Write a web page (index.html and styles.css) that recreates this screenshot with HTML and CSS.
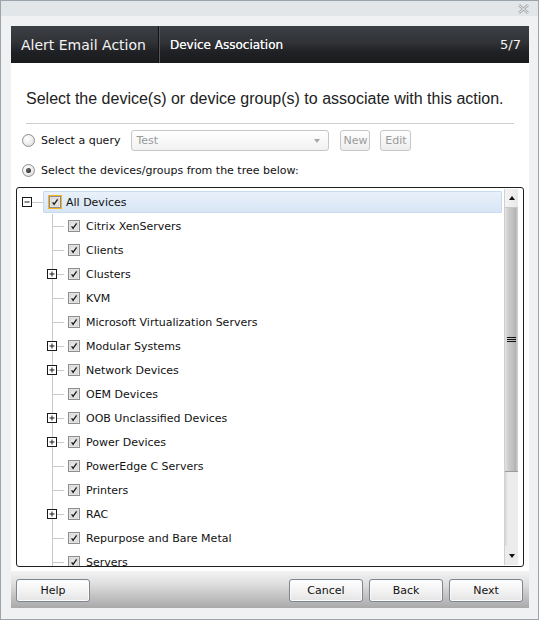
FILE: index.html
```html
<!DOCTYPE html>
<html>
<head>
<meta charset="utf-8">
<link rel="stylesheet" href="styles.css">
</head>
<body>
<div class="window">
  <div class="titlebar">
    <svg class="close" width="11" height="10" viewBox="0 0 11 10"><path d="M1 1 L10 9 M10 1 L1 9" stroke="#a6a9ad" stroke-width="2.6" fill="none"/><path d="M1 1 L10 9 M10 1 L1 9" stroke="#eceef0" stroke-width="1" fill="none"/></svg>
  </div>
  <div class="main">
    <div class="header">
      <span class="h-title">Alert Email Action</span>
      <span class="h-div"></span>
      <span class="h-sub">Device Association</span>
      <span class="h-step">5/7</span>
    </div>
    <div class="panel">
      <div class="heading">Select the device(s) or device group(s) to associate with this action.</div>
      <div class="sep"></div>
      <div class="qrow">
        <span class="radio"></span>
        <span class="lbl">Select a query</span>
        <span class="select"><span class="sel-text">Test</span><span class="arrow"></span></span>
        <span class="sbtn new">New</span>
        <span class="sbtn">Edit</span>
      </div>
      <div class="trow">
        <span class="radio checked"></span>
        <span class="lbl">Select the devices/groups from the tree below:</span>
      </div>
      <div class="tree">
        <div class="rows">
          <div class="root">
            <svg class="exp" width="10" height="10" viewBox="0 0 10 10"><rect x="0.5" y="0.5" width="9" height="9" fill="#fff" stroke="#1a1a1a"/><path d="M2.5 5 H7.5" stroke="#1a1a1a"/></svg>
            <span class="rconn"></span>
            <div class="hl">
              <span class="focus"><svg class="cb" width="12" height="12" viewBox="0 0 12 12"><rect x="0.5" y="0.5" width="11" height="11" fill="#f4f4f4" stroke="#8d8d8d"/><rect x="2" y="2" width="8" height="8" fill="#e6e6e6" stroke="#bdbdbd" stroke-width="0.6"/><path d="M3.6 6.4 L5.1 8.3 L8.6 3.4" stroke="#1e1e1e" stroke-width="1.4" fill="none"/></svg></span>
              <span class="txt">All Devices</span>
            </div>
          </div>
          <div class="children">
            <div class="row"><span class="slot"></span><span class="conn"></span><svg class="cb" width="12" height="12" viewBox="0 0 12 12"><rect x="0.5" y="0.5" width="11" height="11" fill="#f4f4f4" stroke="#8d8d8d"/><rect x="2" y="2" width="8" height="8" fill="#e6e6e6" stroke="#bdbdbd" stroke-width="0.6"/><path d="M3.6 6.4 L5.1 8.3 L8.6 3.4" stroke="#1e1e1e" stroke-width="1.4" fill="none"/></svg><span class="txt">Citrix XenServers</span></div>
            <div class="row"><span class="slot"></span><span class="conn"></span><svg class="cb" width="12" height="12" viewBox="0 0 12 12"><rect x="0.5" y="0.5" width="11" height="11" fill="#f4f4f4" stroke="#8d8d8d"/><rect x="2" y="2" width="8" height="8" fill="#e6e6e6" stroke="#bdbdbd" stroke-width="0.6"/><path d="M3.6 6.4 L5.1 8.3 L8.6 3.4" stroke="#1e1e1e" stroke-width="1.4" fill="none"/></svg><span class="txt">Clients</span></div>
            <div class="row"><span class="slot"><svg class="exp" width="10" height="10" viewBox="0 0 10 10"><rect x="0.5" y="0.5" width="9" height="9" fill="#fff" stroke="#1a1a1a"/><path d="M2.5 5 H7.5 M5 2.5 V7.5" stroke="#1a1a1a"/></svg></span><span class="conn"></span><svg class="cb" width="12" height="12" viewBox="0 0 12 12"><rect x="0.5" y="0.5" width="11" height="11" fill="#f4f4f4" stroke="#8d8d8d"/><rect x="2" y="2" width="8" height="8" fill="#e6e6e6" stroke="#bdbdbd" stroke-width="0.6"/><path d="M3.6 6.4 L5.1 8.3 L8.6 3.4" stroke="#1e1e1e" stroke-width="1.4" fill="none"/></svg><span class="txt">Clusters</span></div>
            <div class="row"><span class="slot"></span><span class="conn"></span><svg class="cb" width="12" height="12" viewBox="0 0 12 12"><rect x="0.5" y="0.5" width="11" height="11" fill="#f4f4f4" stroke="#8d8d8d"/><rect x="2" y="2" width="8" height="8" fill="#e6e6e6" stroke="#bdbdbd" stroke-width="0.6"/><path d="M3.6 6.4 L5.1 8.3 L8.6 3.4" stroke="#1e1e1e" stroke-width="1.4" fill="none"/></svg><span class="txt">KVM</span></div>
            <div class="row"><span class="slot"></span><span class="conn"></span><svg class="cb" width="12" height="12" viewBox="0 0 12 12"><rect x="0.5" y="0.5" width="11" height="11" fill="#f4f4f4" stroke="#8d8d8d"/><rect x="2" y="2" width="8" height="8" fill="#e6e6e6" stroke="#bdbdbd" stroke-width="0.6"/><path d="M3.6 6.4 L5.1 8.3 L8.6 3.4" stroke="#1e1e1e" stroke-width="1.4" fill="none"/></svg><span class="txt">Microsoft Virtualization Servers</span></div>
            <div class="row"><span class="slot"><svg class="exp" width="10" height="10" viewBox="0 0 10 10"><rect x="0.5" y="0.5" width="9" height="9" fill="#fff" stroke="#1a1a1a"/><path d="M2.5 5 H7.5 M5 2.5 V7.5" stroke="#1a1a1a"/></svg></span><span class="conn"></span><svg class="cb" width="12" height="12" viewBox="0 0 12 12"><rect x="0.5" y="0.5" width="11" height="11" fill="#f4f4f4" stroke="#8d8d8d"/><rect x="2" y="2" width="8" height="8" fill="#e6e6e6" stroke="#bdbdbd" stroke-width="0.6"/><path d="M3.6 6.4 L5.1 8.3 L8.6 3.4" stroke="#1e1e1e" stroke-width="1.4" fill="none"/></svg><span class="txt">Modular Systems</span></div>
            <div class="row"><span class="slot"><svg class="exp" width="10" height="10" viewBox="0 0 10 10"><rect x="0.5" y="0.5" width="9" height="9" fill="#fff" stroke="#1a1a1a"/><path d="M2.5 5 H7.5 M5 2.5 V7.5" stroke="#1a1a1a"/></svg></span><span class="conn"></span><svg class="cb" width="12" height="12" viewBox="0 0 12 12"><rect x="0.5" y="0.5" width="11" height="11" fill="#f4f4f4" stroke="#8d8d8d"/><rect x="2" y="2" width="8" height="8" fill="#e6e6e6" stroke="#bdbdbd" stroke-width="0.6"/><path d="M3.6 6.4 L5.1 8.3 L8.6 3.4" stroke="#1e1e1e" stroke-width="1.4" fill="none"/></svg><span class="txt">Network Devices</span></div>
            <div class="row"><span class="slot"></span><span class="conn"></span><svg class="cb" width="12" height="12" viewBox="0 0 12 12"><rect x="0.5" y="0.5" width="11" height="11" fill="#f4f4f4" stroke="#8d8d8d"/><rect x="2" y="2" width="8" height="8" fill="#e6e6e6" stroke="#bdbdbd" stroke-width="0.6"/><path d="M3.6 6.4 L5.1 8.3 L8.6 3.4" stroke="#1e1e1e" stroke-width="1.4" fill="none"/></svg><span class="txt">OEM Devices</span></div>
            <div class="row"><span class="slot"><svg class="exp" width="10" height="10" viewBox="0 0 10 10"><rect x="0.5" y="0.5" width="9" height="9" fill="#fff" stroke="#1a1a1a"/><path d="M2.5 5 H7.5 M5 2.5 V7.5" stroke="#1a1a1a"/></svg></span><span class="conn"></span><svg class="cb" width="12" height="12" viewBox="0 0 12 12"><rect x="0.5" y="0.5" width="11" height="11" fill="#f4f4f4" stroke="#8d8d8d"/><rect x="2" y="2" width="8" height="8" fill="#e6e6e6" stroke="#bdbdbd" stroke-width="0.6"/><path d="M3.6 6.4 L5.1 8.3 L8.6 3.4" stroke="#1e1e1e" stroke-width="1.4" fill="none"/></svg><span class="txt">OOB Unclassified Devices</span></div>
            <div class="row"><span class="slot"><svg class="exp" width="10" height="10" viewBox="0 0 10 10"><rect x="0.5" y="0.5" width="9" height="9" fill="#fff" stroke="#1a1a1a"/><path d="M2.5 5 H7.5 M5 2.5 V7.5" stroke="#1a1a1a"/></svg></span><span class="conn"></span><svg class="cb" width="12" height="12" viewBox="0 0 12 12"><rect x="0.5" y="0.5" width="11" height="11" fill="#f4f4f4" stroke="#8d8d8d"/><rect x="2" y="2" width="8" height="8" fill="#e6e6e6" stroke="#bdbdbd" stroke-width="0.6"/><path d="M3.6 6.4 L5.1 8.3 L8.6 3.4" stroke="#1e1e1e" stroke-width="1.4" fill="none"/></svg><span class="txt">Power Devices</span></div>
            <div class="row"><span class="slot"></span><span class="conn"></span><svg class="cb" width="12" height="12" viewBox="0 0 12 12"><rect x="0.5" y="0.5" width="11" height="11" fill="#f4f4f4" stroke="#8d8d8d"/><rect x="2" y="2" width="8" height="8" fill="#e6e6e6" stroke="#bdbdbd" stroke-width="0.6"/><path d="M3.6 6.4 L5.1 8.3 L8.6 3.4" stroke="#1e1e1e" stroke-width="1.4" fill="none"/></svg><span class="txt">PowerEdge C Servers</span></div>
            <div class="row"><span class="slot"></span><span class="conn"></span><svg class="cb" width="12" height="12" viewBox="0 0 12 12"><rect x="0.5" y="0.5" width="11" height="11" fill="#f4f4f4" stroke="#8d8d8d"/><rect x="2" y="2" width="8" height="8" fill="#e6e6e6" stroke="#bdbdbd" stroke-width="0.6"/><path d="M3.6 6.4 L5.1 8.3 L8.6 3.4" stroke="#1e1e1e" stroke-width="1.4" fill="none"/></svg><span class="txt">Printers</span></div>
            <div class="row"><span class="slot"><svg class="exp" width="10" height="10" viewBox="0 0 10 10"><rect x="0.5" y="0.5" width="9" height="9" fill="#fff" stroke="#1a1a1a"/><path d="M2.5 5 H7.5 M5 2.5 V7.5" stroke="#1a1a1a"/></svg></span><span class="conn"></span><svg class="cb" width="12" height="12" viewBox="0 0 12 12"><rect x="0.5" y="0.5" width="11" height="11" fill="#f4f4f4" stroke="#8d8d8d"/><rect x="2" y="2" width="8" height="8" fill="#e6e6e6" stroke="#bdbdbd" stroke-width="0.6"/><path d="M3.6 6.4 L5.1 8.3 L8.6 3.4" stroke="#1e1e1e" stroke-width="1.4" fill="none"/></svg><span class="txt">RAC</span></div>
            <div class="row"><span class="slot"></span><span class="conn"></span><svg class="cb" width="12" height="12" viewBox="0 0 12 12"><rect x="0.5" y="0.5" width="11" height="11" fill="#f4f4f4" stroke="#8d8d8d"/><rect x="2" y="2" width="8" height="8" fill="#e6e6e6" stroke="#bdbdbd" stroke-width="0.6"/><path d="M3.6 6.4 L5.1 8.3 L8.6 3.4" stroke="#1e1e1e" stroke-width="1.4" fill="none"/></svg><span class="txt">Repurpose and Bare Metal</span></div>
            <div class="row"><span class="slot"></span><span class="conn"></span><svg class="cb" width="12" height="12" viewBox="0 0 12 12"><rect x="0.5" y="0.5" width="11" height="11" fill="#f4f4f4" stroke="#8d8d8d"/><rect x="2" y="2" width="8" height="8" fill="#e6e6e6" stroke="#bdbdbd" stroke-width="0.6"/><path d="M3.6 6.4 L5.1 8.3 L8.6 3.4" stroke="#1e1e1e" stroke-width="1.4" fill="none"/></svg><span class="txt">Servers</span></div>
          </div>
        </div>
        <div class="scrollbar">
          <div class="sb-btn"><span class="tri up"></span></div>
          <div class="thumb"><span class="grip"></span></div>
          <div class="track"></div>
          <div class="sb-btn bottom"><span class="tri down"></span></div>
        </div>
      </div>
    </div>
    <div class="footer">
      <span class="btn">Help</span>
      <span class="spacer"></span>
      <span class="btn">Cancel</span>
      <span class="btn">Back</span>
      <span class="btn">Next</span>
    </div>
  </div>
</div>
</body>
</html>
```
FILE: styles.css
```css
html, body {
  margin: 0;
  padding: 0;
  background: #ffffff;
}
body {
  font-family: "DejaVu Sans", Verdana, sans-serif;
  font-size: 11px;
  color: #111;
}
.window {
  width: 539px;
  height: 620px;
  box-sizing: border-box;
  border: 1px solid #9ba3ac;
  background: #eff1f3;
  display: flex;
  flex-direction: column;
}
.titlebar {
  height: 15px;
  background: #e3e6e8;
  display: flex;
  justify-content: flex-end;
  align-items: center;
  padding-right: 9px;
}
.close { display: block; margin-top: 1px; }
.main {
  padding: 10px 9px 0 10px;
  display: flex;
  flex-direction: column;
}
.header {
  height: 37px;
  background: linear-gradient(#3d4045 0%, #303236 45%, #202124 70%, #1a1b1d 100%);
  display: flex;
  align-items: center;
  color: #fff;
  padding: 0 8px 0 10px;
}
.h-title {
  font-size: 14px;
  color: #f4f4f4;
}
.h-div {
  width: 1px;
  height: 37px;
  background: #111;
  box-shadow: 1px 0 0 #55585d;
  margin: 0 11px 0 12px;
}
.h-sub {
  font-size: 12px;
  color: #f4f4f4;
  flex: 1;
  text-shadow: 0 0 0.4px #fff;
}
.h-step {
  font-size: 13px;
  color: #f4f4f4;
}
.panel {
  background: #fff;
  height: 508px;
  box-sizing: border-box;
  display: flex;
  flex-direction: column;
}
.heading {
  font-family: "Liberation Sans", Arial, sans-serif;
  font-size: 16px;
  line-height: 19px;
  color: #222;
  margin: 26px 15px 0 15px;
}
.sep {
  height: 1px;
  background: #cfcfcf;
  margin: 15px 15px 0 15px;
}
.qrow {
  display: flex;
  align-items: center;
  height: 21px;
  margin: 6px 0 0 11px;
}
.trow {
  display: flex;
  align-items: center;
  height: 16px;
  margin: 11px 0 0 11px;
}
.radio {
  width: 13px;
  height: 13px;
  box-sizing: border-box;
  border-radius: 50%;
  border: 1px solid #8f9091;
  background: radial-gradient(circle at 40% 35%, #ffffff 0%, #f0f0f0 45%, #d2d2d2 100%);
  display: flex;
  align-items: center;
  justify-content: center;
  flex: none;
}
.radio.checked::after {
  content: "";
  width: 5px;
  height: 5px;
  border-radius: 50%;
  background: radial-gradient(circle at 40% 35%, #6a6a6a, #1a1a1a);
}
.lbl {
  margin-left: 6px;
  color: #111;
}
.select {
  margin-left: 11px;
  width: 198px;
  height: 21px;
  box-sizing: border-box;
  border: 1px solid #c6c6c6;
  border-radius: 3px;
  background: linear-gradient(#ffffff, #f1f1f1);
  display: flex;
  align-items: center;
  padding: 0 8px 0 4px;
}
.sel-text {
  flex: 1;
  color: #9a9a9a;
}
.arrow {
  width: 0;
  height: 0;
  border-left: 3.5px solid transparent;
  border-right: 3.5px solid transparent;
  border-top: 4px solid #a8a8a8;
}
.sbtn {
  height: 21px;
  box-sizing: border-box;
  border: 1px solid #c6c6c6;
  border-radius: 3px;
  background: linear-gradient(#ffffff, #ededed);
  color: #9a9a9a;
  display: flex;
  align-items: center;
  justify-content: center;
  padding: 0 2px;
  width: 31px;
  margin-left: 10px;
}
.sbtn.new { margin-left: 11px; width: 30px; }
.tree {
  margin: 9px 5px 0 5px;
  height: 380px;
  box-sizing: border-box;
  border: 1px solid #1f1f1f;
  border-radius: 3px;
  display: flex;
  overflow: hidden;
}
.rows {
  flex: 1;
  overflow: hidden;
  padding-top: 2px;
}
.root {
  height: 24px;
  display: flex;
  align-items: center;
  padding-left: 5px;
}
.exp { display: block; flex: none; }
.rconn {
  width: 11px;
  height: 1px;
  background: #c9c9c9;
  flex: none;
}
.hl {
  flex: 1;
  height: 22px;
  box-sizing: border-box;
  border: 1px solid #c7dbef;
  border-radius: 1px;
  background: linear-gradient(#e9f1fa, #d7e5f4);
  margin-right: 2px;
  display: flex;
  align-items: center;
  padding-left: 5px;
}
.focus {
  display: flex;
  border: 1px solid #f2b325;
  margin-left: -1px;
}
.focus .cb { margin: 0; }
.hl .txt { margin-left: 4px; }
.children {
  background: linear-gradient(#c9c9c9, #c9c9c9) no-repeat 35px 0 / 1px 100%;
}
.row {
  height: 24px;
  display: flex;
  align-items: center;
  padding-left: 30px;
}
.slot {
  width: 10px;
  height: 24px;
  flex: none;
  display: flex;
  align-items: center;
  justify-content: center;
  background: linear-gradient(#c9c9c9, #c9c9c9) no-repeat right center / 5px 1px;
}
.conn {
  width: 7px;
  height: 1px;
  background: #c9c9c9;
  flex: none;
  margin-right: 4px;
}
.cb { display: block; flex: none; }
.txt {
  margin-left: 6px;
  color: #111;
  white-space: nowrap;
}
.scrollbar {
  width: 14px;
  margin: 1px 5px 1px 0;
  display: flex;
  flex-direction: column;
  background: #e6e6e6;
  border-left: 1px solid #d0d0d0;
  box-sizing: border-box;
}
.sb-btn {
  height: 19px;
  background: linear-gradient(to right, #f4f4f4, #e8e8e8);
  display: flex;
  align-items: center;
  justify-content: center;
  border-bottom: 1px solid #c8c8c8;
  box-sizing: border-box;
}
.sb-btn.bottom { border-bottom: 0; border-top: 0; background: #ececec; }
.tri {
  width: 0;
  height: 0;
  border-left: 3.5px solid transparent;
  border-right: 3.5px solid transparent;
}
.tri.up { border-bottom: 4px solid #111; }
.tri.down { border-top: 4px solid #111; }
.thumb {
  height: 264px;
  background: linear-gradient(to right, #e2e2e2 0%, #cacaca 30%, #c0c0c0 60%, #b2b2b2 80%, #d4d4d4 100%);
  border-bottom: 1px solid #9a9a9a;
  box-sizing: border-box;
  display: flex;
  align-items: center;
  justify-content: center;
}
.grip {
  width: 9px;
  height: 5px;
  margin-top: 0;
  background: repeating-linear-gradient(#111 0 1px, transparent 1px 2px);
}
.track {
  flex: 1;
  background: linear-gradient(to right, #d6d6d6 0, #ececec 3px, #ececec 100%);
}
.footer {
  height: 37px;
  background: linear-gradient(#f3f3f3 0%, #dedede 35%, #bdbdbd 75%, #a9a9a9 100%);
  display: flex;
  align-items: flex-start;
  padding: 8px 6px 0 5px;
  box-sizing: border-box;
  gap: 6px;
}
.spacer { flex: 1; }
.btn {
  width: 74px;
  height: 23px;
  box-sizing: border-box;
  border: 1px solid #7d8590;
  border-radius: 3px;
  background: linear-gradient(#ffffff 0%, #f3f3f3 50%, #e4e4e4 100%);
  box-shadow: inset 0 0 0 1px #fbfbfb;
  display: flex;
  align-items: center;
  justify-content: center;
  color: #111;
}
```
